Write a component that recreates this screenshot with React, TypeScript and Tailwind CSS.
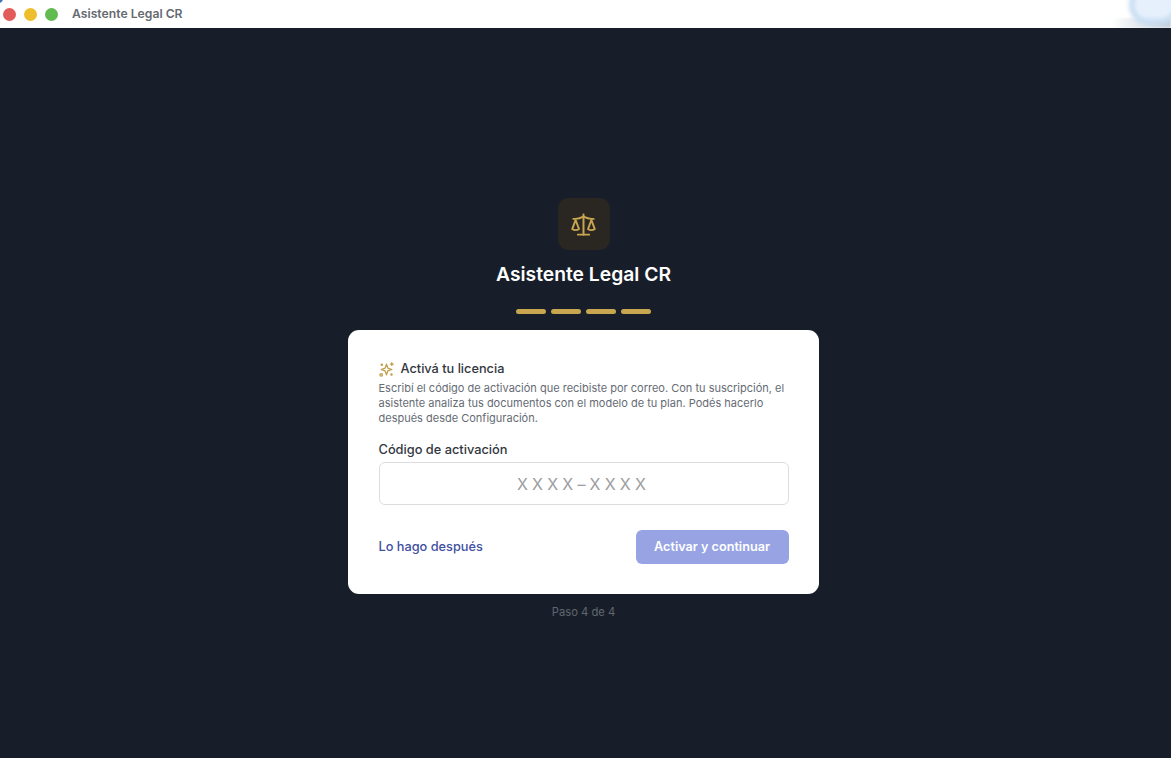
export default function App() {
  return (
    <div className="relative flex h-[758px] w-[1171px] flex-col overflow-hidden bg-[#181e29] font-['Inter',sans-serif]">
      <header className="relative flex h-[28px] shrink-0 items-center overflow-hidden bg-white pl-[3px]">
        <div className="absolute -left-[6px] -top-[6px] h-[9px] w-[9px] rounded-full bg-[#3f74b8]" />
        <div className="flex items-center gap-[8px]">
          <span className="h-[13px] w-[13px] rounded-full bg-[#e25c59]" />
          <span className="h-[13px] w-[13px] rounded-full bg-[#eebf2c]" />
          <span className="h-[13px] w-[13px] rounded-full bg-[#60bb50]" />
        </div>
        <span className="ml-[14px] text-[12.2px] font-semibold text-[#666a70]">Asistente Legal CR</span>
        <div className="absolute bottom-0 right-0 h-[10px] w-[60px] bg-gradient-to-r from-white to-[#c3cedb] blur-[1px]" />
        <div className="absolute -right-[8px] -top-[14px] h-[38px] w-[50px] rounded-full border-[5px] border-[#c4dcf2] bg-[#e6f0fc] blur-[2px]" />
      </header>
      <main className="flex flex-1 flex-col items-center pr-[4px] pt-[170px]">
        <div className="flex h-[52px] w-[52px] items-center justify-center rounded-[11px] bg-[#2a2723]">
          <svg className="h-[27px] w-[27px] text-[#c8a650]" viewBox="0 0 24 24" fill="none" stroke="currentColor" strokeWidth="1.75" strokeLinecap="round" strokeLinejoin="round">
            <path d="m16 16 3-8 3 8c-.87.65-1.92 1-3 1s-2.13-.35-3-1Z" />
            <path d="m2 16 3-8 3 8c-.87.65-1.92 1-3 1s-2.13-.35-3-1Z" />
            <path d="M7 21h10" />
            <path d="M12 3v18" />
            <path d="M3 7h2c2 0 5-1 7-2 2 1 5 2 7 2h2" />
          </svg>
        </div>
        <h1 className="mt-[10px] text-[19.3px] leading-[28px] font-semibold text-white">Asistente Legal CR</h1>
        <div className="mt-[21px] flex gap-[5px]">
          <span className="h-[5px] w-[30px] rounded-full bg-[#c8a650]" />
          <span className="h-[5px] w-[30px] rounded-full bg-[#c8a650]" />
          <span className="h-[5px] w-[30px] rounded-full bg-[#c8a650]" />
          <span className="h-[5px] w-[30px] rounded-full bg-[#c8a650]" />
        </div>
        <section className="mt-[16px] w-[471px] rounded-[11px] bg-white px-[30.5px] py-[30px]">
          <div className="flex items-center gap-[7px]">
            <svg className="h-[15px] w-[15px] text-[#c09c45]" viewBox="0 0 24 24" fill="none" stroke="currentColor" strokeWidth="2" strokeLinecap="round" strokeLinejoin="round">
              <path d="M12 3.5 14.2 9.8 20.5 12 14.2 14.2 12 20.5 9.8 14.2 3.5 12 9.8 9.8Z" />
              <path d="M20.5 1v4.5M18.2 3.2h4.6" />
              <circle cx="3.5" cy="20.5" r="2" />
              <circle cx="4.5" cy="4.5" r="1" />
              <circle cx="20" cy="20" r="1" />
            </svg>
            <h2 className="text-[12.75px] leading-[18px] font-medium text-[#33373e]">Activá tu licencia</h2>
          </div>
          <p className="mt-[3px] text-[11px] leading-[15px] text-[#666b74]">
            Escribí el código de activación que recibiste por correo. Con tu suscripción, el asistente analiza tus documentos con el modelo de tu plan. Podés hacerlo después desde Configuración.
          </p>
          <label className="mt-[15px] block text-[12.8px] leading-[18px] font-medium text-[#33373e]">Código de activación</label>
          <div className="mt-[3px] flex h-[43px] items-center justify-center rounded-[6px] border border-[#dcdde0] bg-white text-[16px] tracking-[4.2px] text-[#9b9da1]">
            XXXX–XXXX
          </div>
          <div className="mt-[25px] flex items-center justify-between">
            <a className="text-[12.75px] font-medium text-[#4150a0]">Lo hago después</a>
            <button className="flex h-[34px] w-[153px] items-center justify-center rounded-[6px] bg-[#97a3e3] text-[12.65px] font-semibold text-white">
              Activar y continuar
            </button>
          </div>
        </section>
        <p className="mt-[11px] text-[11.2px] leading-[15px] text-[#62666f]">Paso 4 de 4</p>
      </main>
    </div>
  );
}
